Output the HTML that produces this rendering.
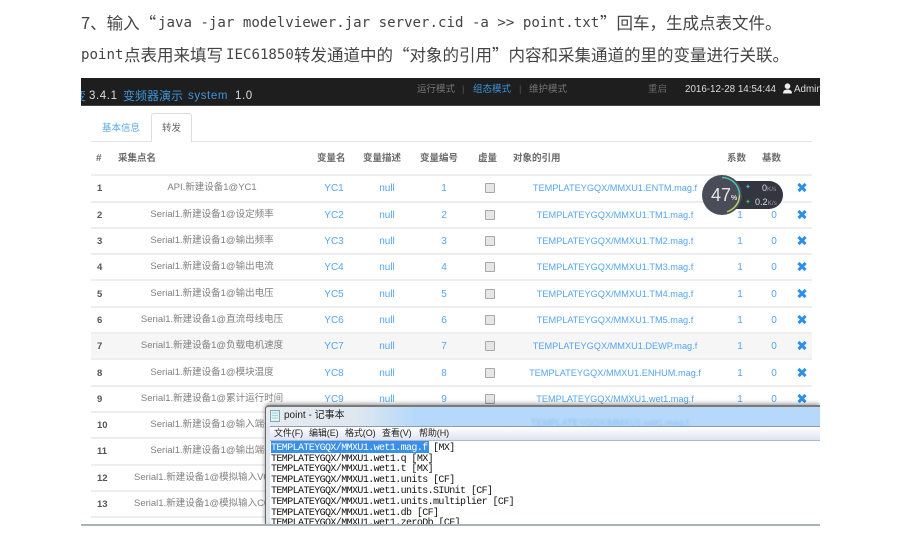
<!DOCTYPE html>
<html lang="zh">
<head>
<meta charset="utf-8">
<style>
html,body{margin:0;padding:0;background:#fff}
#p{position:relative;width:900px;height:550px;overflow:hidden;background:#fff;font-family:"Liberation Sans","Noto Sans CJK SC",sans-serif}
#p div,#p span{position:absolute;white-space:nowrap}
.t{font-family:"Noto Sans CJK SC",sans-serif;font-size:16.5px;color:#444;line-height:20px}
.m{font-family:"DejaVu Sans Mono",monospace;font-size:14.1px;color:#444;line-height:20px}
.n{font-size:9.5px;line-height:14px;color:#777}
.h{font-size:9.5px;line-height:14px;color:#6a6a6a;font-weight:bold;top:152px}
.l{left:91px;width:721px;height:2px;background:#eee}
.r{left:81px;width:739px;height:14px;font-size:9.2px;line-height:14px;color:#55a6ee}
.r span{transform:translateX(-50%);line-height:14px}
.a{left:16px;top:1px;color:#555;font-weight:bold;font-size:9.5px;transform:none!important}
.b{left:131px;color:#808080;font-size:9.5px}
.c{left:253px;top:1px;font-size:10px}.d{left:306px;top:1px;font-size:10px}.e{left:363px;top:1px;font-size:10px}
.g{left:534px}.i{left:659px;top:1px;font-size:10px}.j{left:693px;top:1px;font-size:10px}
.f{left:404px;top:2px;width:8px;height:8px;background:#e6e6e6;border:1px solid #a8a8a8;border-radius:1px;transform:none!important}
.x{left:717px;top:2px;width:8px;height:8px;transform:none!important}
.x::before,.x::after{content:"";position:absolute;left:-1px;top:2.700px;width:10px;height:2.800px;background:#2b90ea;transform:rotate(45deg)}
.x::after{transform:rotate(-45deg)}
.o{font-family:"Liberation Mono",monospace;font-size:10px;letter-spacing:-.6px;line-height:11px;color:#111;left:271px}
.mn{font-family:"Liberation Sans","Noto Sans CJK SC",sans-serif;font-size:9px;letter-spacing:-.1px;line-height:12px;color:#222;top:427px}
</style>
</head>
<body>
<div id="p">
<div class="t" style="left:81px;top:12px">7、输入“</div>
<div class="m" style="left:158px;top:13px">java -jar modelviewer.jar server.cid -a &gt;&gt; point.txt</div>
<div class="t" style="left:600px;top:12px">”回车，生成点表文件。</div>
<div class="m" style="left:81px;top:45px">point</div>
<div class="t" style="left:124px;top:44px">点表用来填写</div>
<div class="m" style="left:226px;top:45px">IEC61850</div>
<div class="t" style="left:294px;top:44px">转发通道中的“对象的引用”内容和采集通道的里的变量进行关联。</div>

<div style="left:81px;top:78px;width:739px;height:28px;background:#1e1e1e;border-bottom:1px solid #444;box-sizing:border-box;overflow:hidden">
  <span style="left:-7px;top:11px;font-size:12px;line-height:14px;color:#3d94dc">变</span>
  <span style="left:8px;top:11px;font-size:11.500px;line-height:14px;color:#ddd;letter-spacing:.6px">3.4.1</span>
  <span style="left:42px;top:11px;font-size:12px;line-height:14px;color:#3d94dc">变频器演示</span>
  <span style="left:107px;top:11px;font-size:11.500px;line-height:14px;color:#3d94dc;letter-spacing:.6px">system</span>
  <span style="left:154px;top:11px;font-size:11.500px;line-height:14px;color:#ddd;letter-spacing:.6px">1.0</span>
  <span class="n" style="left:336px;top:5px">运行模式</span>
  <span class="n" style="left:381px;top:5px;color:#555">|</span>
  <span class="n" style="left:392px;top:5px;color:#3d94dc">组态模式</span>
  <span class="n" style="left:438px;top:5px;color:#555">|</span>
  <span class="n" style="left:448px;top:5px">维护模式</span>
  <span class="n" style="left:567px;top:5px;color:#666">重启</span>
  <span style="left:604px;top:5px;font-size:9.800px;line-height:14px;color:#ddd">2016-12-28 14:54:44</span>
  <svg style="position:absolute;left:701px;top:5px" width="11" height="11" viewBox="0 0 11 11"><circle cx="5.500" cy="3.200" r="2.800" fill="#eee"/><path d="M1 10.500C1 7.500 3 6.500 5.500 6.500S10 7.500 10 10.500Z" fill="#eee"/></svg>
  <span style="left:713px;top:5px;font-size:9.800px;line-height:14px;color:#ddd">Admin</span>
</div>

<div style="left:151px;top:113px;width:41px;height:29px;box-sizing:border-box;border:1px solid #ddd;border-bottom:0;border-radius:3px 3px 0 0;background:#fff;z-index:2"></div>
<div class="l" style="top:141px;height:1px;background:#e4e4e4"></div>
<div class="n" style="left:102px;top:122px;color:#5aa9e6;">基本信息</div>
<div class="n" style="left:162px;top:122px;color:#666;z-index:3">转发</div>

<div class="h" style="left:96px;font-size:10px">#</div>
<div class="h" style="left:118px">采集点名</div>
<div class="h" style="left:317px">变量名</div>
<div class="h" style="left:363px">变量描述</div>
<div class="h" style="left:420px">变量编号</div>
<div class="h" style="left:478px">虚量</div>
<div class="h" style="left:513px">对象的引用</div>
<div class="h" style="left:727px">系数</div>
<div class="h" style="left:762px">基数</div>

<div style="left:91px;top:334px;width:721px;height:25px;background:#f6f6f6"></div>

<div class="l" style="top:174px"></div><div class="l" style="top:201px"></div><div class="l" style="top:227px"></div><div class="l" style="top:253px"></div><div class="l" style="top:279px"></div><div class="l" style="top:306px"></div><div class="l" style="top:332px"></div><div class="l" style="top:358px"></div><div class="l" style="top:385px"></div><div class="l" style="top:411px"></div><div class="l" style="top:437px"></div><div class="l" style="top:464px"></div><div class="l" style="top:490px"></div><div class="l" style="top:516px"></div>

<div class="r" style="top:181px"><span class="a">1</span><span class="b">API.新建设备1@YC1</span><span class="c">YC1</span><span class="d">null</span><span class="e">1</span><span class="f"></span><span class="g">TEMPLATEYGQX/MMXU1.ENTM.mag.f</span><span class="i">1</span><span class="j">0</span><span class="x"></span></div>
<div class="r" style="top:208px"><span class="a">2</span><span class="b">Serial1.新建设备1@设定频率</span><span class="c">YC2</span><span class="d">null</span><span class="e">2</span><span class="f"></span><span class="g">TEMPLATEYGQX/MMXU1.TM1.mag.f</span><span class="i">1</span><span class="j">0</span><span class="x"></span></div>
<div class="r" style="top:234px"><span class="a">3</span><span class="b">Serial1.新建设备1@输出频率</span><span class="c">YC3</span><span class="d">null</span><span class="e">3</span><span class="f"></span><span class="g">TEMPLATEYGQX/MMXU1.TM2.mag.f</span><span class="i">1</span><span class="j">0</span><span class="x"></span></div>
<div class="r" style="top:260px"><span class="a">4</span><span class="b">Serial1.新建设备1@输出电流</span><span class="c">YC4</span><span class="d">null</span><span class="e">4</span><span class="f"></span><span class="g">TEMPLATEYGQX/MMXU1.TM3.mag.f</span><span class="i">1</span><span class="j">0</span><span class="x"></span></div>
<div class="r" style="top:287px"><span class="a">5</span><span class="b">Serial1.新建设备1@输出电压</span><span class="c">YC5</span><span class="d">null</span><span class="e">5</span><span class="f"></span><span class="g">TEMPLATEYGQX/MMXU1.TM4.mag.f</span><span class="i">1</span><span class="j">0</span><span class="x"></span></div>
<div class="r" style="top:313px"><span class="a">6</span><span class="b">Serial1.新建设备1@直流母线电压</span><span class="c">YC6</span><span class="d">null</span><span class="e">6</span><span class="f"></span><span class="g">TEMPLATEYGQX/MMXU1.TM5.mag.f</span><span class="i">1</span><span class="j">0</span><span class="x"></span></div>
<div class="r" style="top:339px"><span class="a">7</span><span class="b">Serial1.新建设备1@负载电机速度</span><span class="c">YC7</span><span class="d">null</span><span class="e">7</span><span class="f"></span><span class="g">TEMPLATEYGQX/MMXU1.DEWP.mag.f</span><span class="i">1</span><span class="j">0</span><span class="x"></span></div>
<div class="r" style="top:366px"><span class="a">8</span><span class="b">Serial1.新建设备1@模块温度</span><span class="c">YC8</span><span class="d">null</span><span class="e">8</span><span class="f"></span><span class="g">TEMPLATEYGQX/MMXU1.ENHUM.mag.f</span><span class="i">1</span><span class="j">0</span><span class="x"></span></div>
<div class="r" style="top:392px"><span class="a">9</span><span class="b">Serial1.新建设备1@累计运行时间</span><span class="c">YC9</span><span class="d">null</span><span class="e">9</span><span class="f"></span><span class="g">TEMPLATEYGQX/MMXU1.wet1.mag.f</span><span class="i">1</span><span class="j">0</span><span class="x"></span></div>
<div class="r" style="top:418px"><span class="a">10</span><span class="b">Serial1.新建设备1@输入端子</span></div>
<div class="r" style="top:444px"><span class="a">11</span><span class="b">Serial1.新建设备1@输出端子</span></div>
<div class="r" style="top:471px"><span class="a">12</span><span class="b" style="left:53px;transform:none">Serial1.新建设备1@模拟输入V0</span></div>
<div class="r" style="top:497px"><span class="a">13</span><span class="b" style="left:53px;transform:none">Serial1.新建设备1@模拟输入C0</span></div>

<!-- speed gauge -->
<div style="left:721px;top:181px;width:62px;height:28px;border-radius:0 14px 14px 0;background:#33353f;z-index:5"></div>
<svg style="position:absolute;left:701px;top:173px;z-index:6" width="44" height="44" viewBox="0 0 44 44">
  <circle cx="21" cy="22" r="20" fill="#4a4c58"/>
  <path d="M21 4.500A17.500 17.500 0 0 1 38.500 22" fill="none" stroke="#45c4ae" stroke-width="1.500"/>
  <path d="M38.500 22A17.500 17.500 0 0 1 26 38.800" fill="none" stroke="#b5d56a" stroke-width="1.500"/>
</svg>
<span style="left:711px;top:185px;font-size:18px;line-height:20px;color:#e4e4e4;z-index:7">47</span>
<span style="left:731px;top:194px;font-size:7px;line-height:10px;color:#ddd;font-weight:bold;z-index:7">%</span>
<span style="left:745px;top:183px;font-size:7px;line-height:10px;color:#4cb4e8;z-index:7">✦</span>
<span style="left:745px;top:198px;font-size:7px;line-height:10px;color:#3cc060;z-index:7">✦</span>
<span style="left:762px;top:183px;font-size:9px;line-height:10px;color:#ddd;z-index:7">0<span style="position:static;font-size:6.500px;color:#999">K/s</span></span>
<span style="left:755px;top:197px;font-size:9px;line-height:10px;color:#ddd;z-index:7">0.2<span style="position:static;font-size:6.500px;color:#999">K/s</span></span>

<!-- notepad -->
<div style="left:265px;top:405px;width:555px;height:120px;background:#fff;z-index:10;overflow:hidden;border-left:1px solid #666;border-top:2px solid #7a7a7a;box-sizing:border-box;border-radius:4px 0 0 0;box-shadow:0 -1px 5px rgba(0,0,0,.45);clip-path:inset(-6px 0 0 -6px)">
  <div style="left:0;top:0;width:555px;height:19px;background:linear-gradient(90deg,#e6ebef 0,#dfe8ef 90px,#b5d8fb 150px,#b5d8fb 100%)"></div>
  <div style="left:0;top:19px;width:4px;height:100px;background:#dfe6ec"></div>
  <span style="left:265px;top:11px;font-size:9.200px;line-height:10px;color:#8fc0ee;filter:blur(1px)">TEMPLATEYGQX/MMXU1.wet1.mag.f</span>
  <div style="left:4px;top:19px;width:551px;height:1px;background:#8a9bb0"></div>
  <div style="left:4px;top:20px;width:551px;height:13px;background:linear-gradient(#fff,#dfe3f2)"></div>
  <div style="left:4px;top:33px;width:551px;height:1px;background:#a8bccc"></div>
</div>
<svg style="position:absolute;left:270px;top:410px;z-index:11" width="10" height="12" viewBox="0 0 10 12"><rect x=".5" y=".5" width="9" height="11" fill="#dff1f4" stroke="#7fa9b5"/><path d="M2 3H8M2 5.500H8M2 8H8" stroke="#9cc" stroke-width=".7"/></svg>
<span style="left:284px;top:409px;font-size:10px;line-height:14px;color:#222;z-index:11">point - 记事本</span>
<span class="mn" style="left:274px;z-index:11">文件(F)</span>
<span class="mn" style="left:309px;z-index:11">编辑(E)</span>
<span class="mn" style="left:345px;z-index:11">格式(O)</span>
<span class="mn" style="left:382px;z-index:11">查看(V)</span>
<span class="mn" style="left:419px;z-index:11">帮助(H)</span>

<div style="left:271px;top:441px;width:158px;height:12px;background:#3a8fe8;z-index:11"></div>
<div class="o" style="top:443px;z-index:12"><span style="position:static;color:#fff">TEMPLATEYGQX/MMXU1.wet1.mag.f</span> [MX]</div>
<div class="o" style="top:454px;z-index:12">TEMPLATEYGQX/MMXU1.wet1.q [MX]</div>
<div class="o" style="top:464px;z-index:12">TEMPLATEYGQX/MMXU1.wet1.t [MX]</div>
<div class="o" style="top:475px;z-index:12">TEMPLATEYGQX/MMXU1.wet1.units [CF]</div>
<div class="o" style="top:486px;z-index:12">TEMPLATEYGQX/MMXU1.wet1.units.SIUnit [CF]</div>
<div class="o" style="top:497px;z-index:12">TEMPLATEYGQX/MMXU1.wet1.units.multiplier [CF]</div>
<div class="o" style="top:508px;z-index:12">TEMPLATEYGQX/MMXU1.wet1.db [CF]</div>
<div class="o" style="top:518px;z-index:12">TEMPLATEYGQX/MMXU1.wet1.zeroDb [CF]</div>

<div style="left:0;top:525px;width:900px;height:25px;background:#fff;z-index:13"></div>
<div style="left:81px;top:524px;width:739px;height:2px;background:#aab2b8;z-index:14"></div>
</div>
</body>
</html>
